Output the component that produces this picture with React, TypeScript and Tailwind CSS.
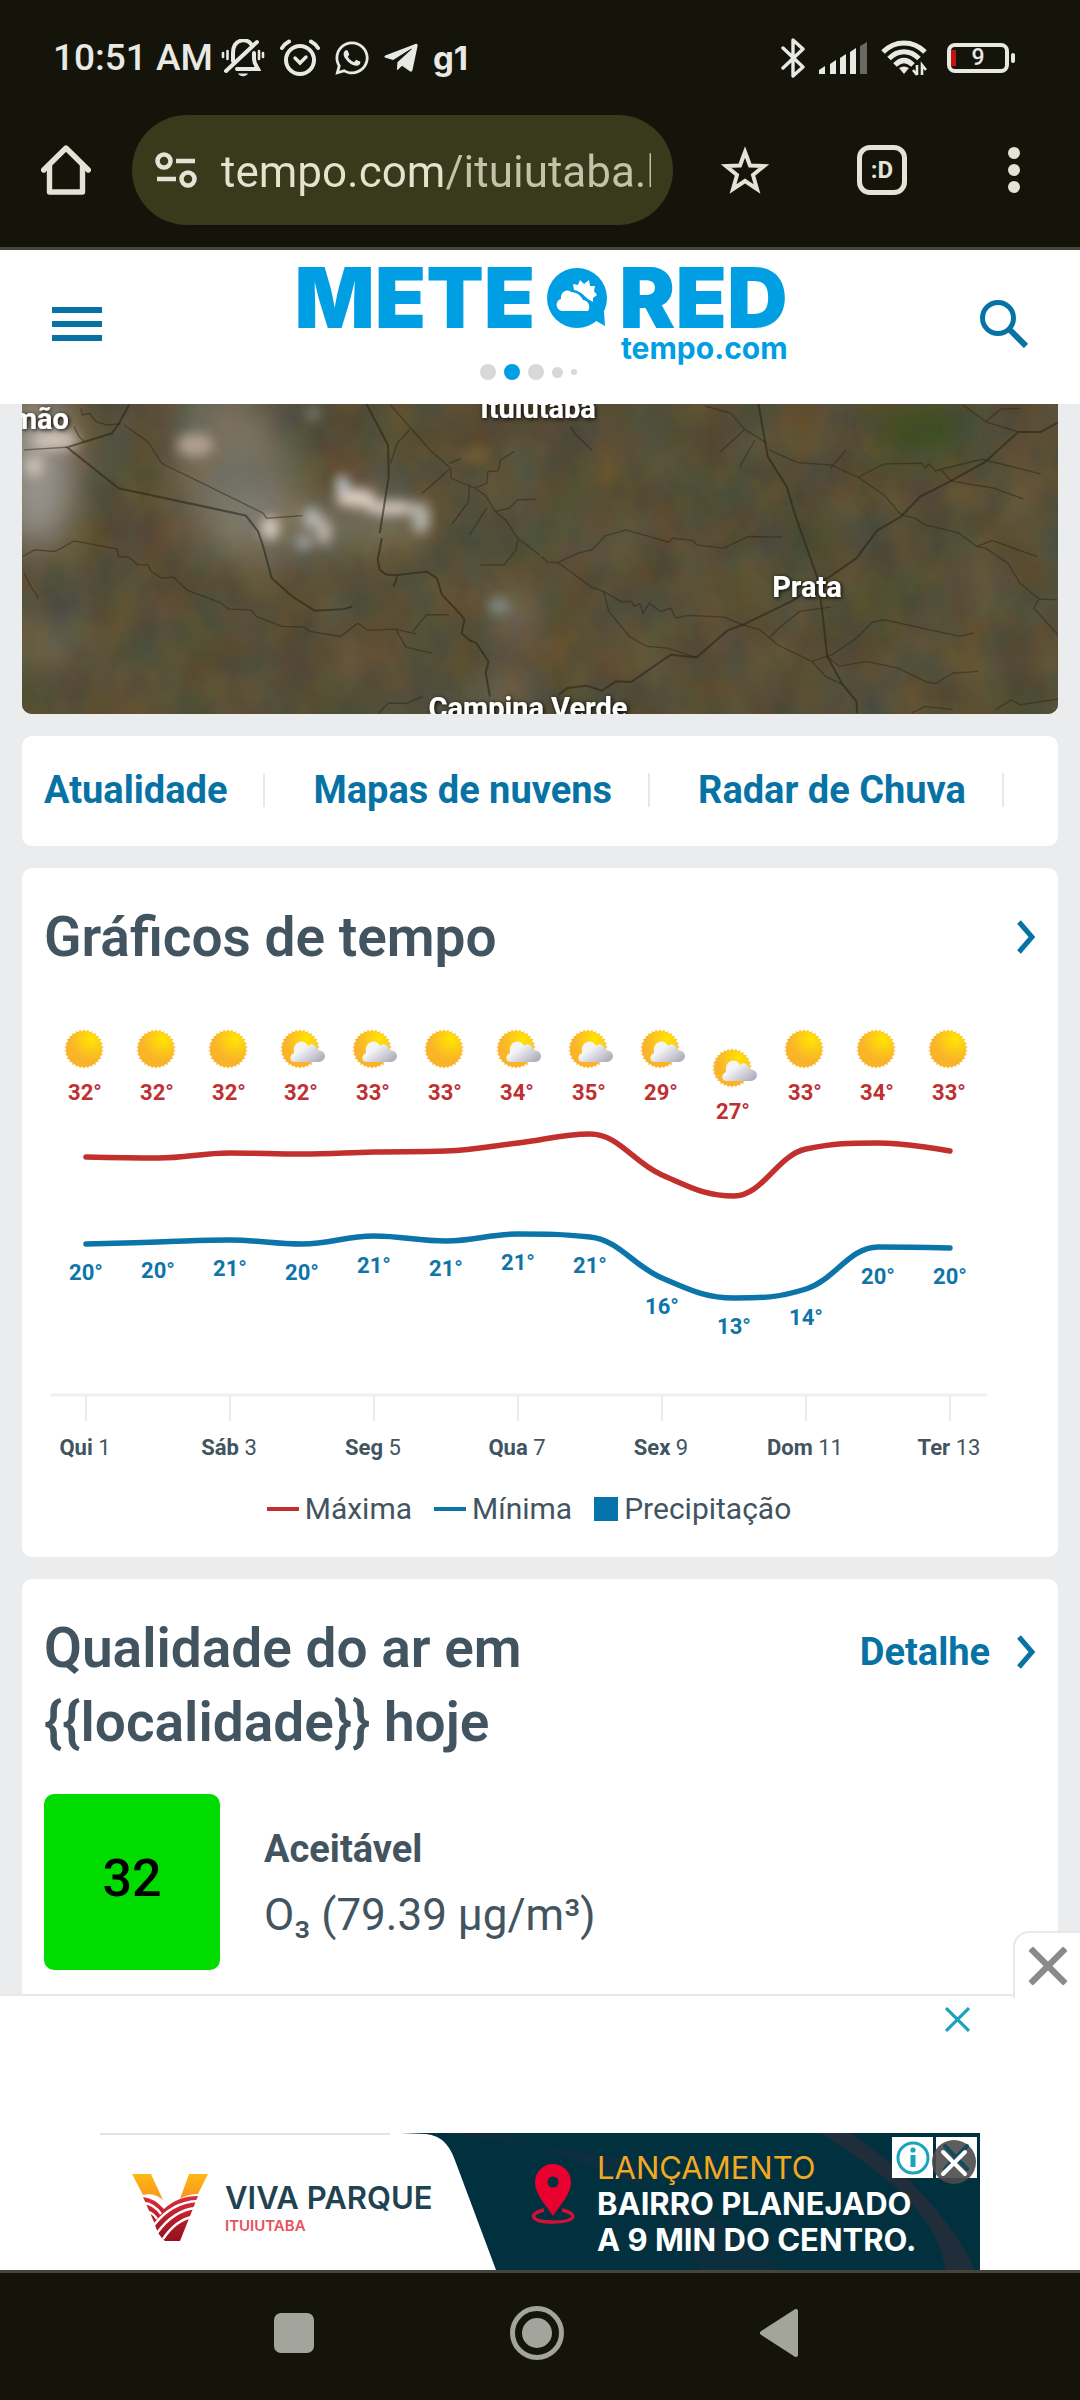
import React, { useState } from "react";
import { FaTelegramPlane, FaWhatsapp } from "react-icons/fa";

const days = [
  { name: "Qui", num: 1, icon: "sun", max: 32, min: 20, maxY: 1156, minY: 1243, labelY: 1279 },
  { name: "Sex", num: 2, icon: "sun", max: 32, min: 20, maxY: 1157, minY: 1241, labelY: 1277 },
  { name: "Sáb", num: 3, icon: "sun", max: 32, min: 21, maxY: 1152, minY: 1239, labelY: 1275 },
  { name: "Dom", num: 4, icon: "cloud", max: 32, min: 20, maxY: 1153, minY: 1243, labelY: 1279 },
  { name: "Seg", num: 5, icon: "cloud", max: 33, min: 21, maxY: 1151, minY: 1235, labelY: 1272 },
  { name: "Ter", num: 6, icon: "sun", max: 33, min: 21, maxY: 1150, minY: 1240, labelY: 1275 },
  { name: "Qua", num: 7, icon: "cloud", max: 34, min: 21, maxY: 1142, minY: 1233, labelY: 1269 },
  { name: "Qui", num: 8, icon: "cloud", max: 35, min: 21, maxY: 1133, minY: 1236, labelY: 1272 },
  { name: "Sex", num: 9, icon: "cloud", max: 29, min: 16, maxY: 1174, minY: 1277, labelY: 1313 },
  { name: "Sáb", num: 10, icon: "cloud", max: 27, min: 13, maxY: 1195, minY: 1297, labelY: 1333 },
  { name: "Dom", num: 11, icon: "sun", max: 33, min: 14, maxY: 1148, minY: 1288, labelY: 1324 },
  { name: "Seg", num: 12, icon: "sun", max: 34, min: 20, maxY: 1142, minY: 1246, labelY: 1283 },
  { name: "Ter", num: 13, icon: "sun", max: 33, min: 20, maxY: 1150, minY: 1247, labelY: 1283 },
];

const dayX = (i: number) => 86 + i * 72;

// smooth line through the points, without overshooting them
function spline(ys: number[]) {
  const pts = ys.map((y, i) => ({ x: dayX(i), y }));
  let d = `M${pts[0].x} ${pts[0].y}`;
  let prev = { x: pts[0].x, y: pts[0].y };

  for (let i = 1; i < pts.length; i++) {
    const p = pts[i];
    const last = pts[i - 1];
    const next = pts[i + 1];
    let lx = p.x;
    let ly = p.y;
    let rx = p.x;
    let ry = p.y;
    if (next) {
      lx = (1.5 * p.x + last.x) / 2.5;
      ly = (1.5 * p.y + last.y) / 2.5;
      rx = (1.5 * p.x + next.x) / 2.5;
      ry = (1.5 * p.y + next.y) / 2.5;
      const correction = ((ry - ly) * (rx - p.x)) / (rx - lx) + p.y - ry;
      ly += correction;
      ry += correction;
      if (ly > last.y && ly > p.y) {
        ly = Math.max(last.y, p.y);
        ry = 2 * p.y - ly;
      } else if (ly < last.y && ly < p.y) {
        ly = Math.min(last.y, p.y);
        ry = 2 * p.y - ly;
      }
      if (ry > next.y && ry > p.y) {
        ry = Math.max(next.y, p.y);
        ly = 2 * p.y - ry;
      } else if (ry < next.y && ry < p.y) {
        ry = Math.min(next.y, p.y);
        ly = 2 * p.y - ry;
      }
    }
    d += ` C${prev.x} ${prev.y} ${lx} ${ly} ${p.x} ${p.y}`;
    prev = { x: rx, y: ry };
  }
  return d;
}

const sunRays = Array.from({ length: 30 }, (_, i) => i * 12);

function SunIcon({ x, y, cloudy }: { x: number; y: number; cloudy: boolean }) {
  return (
    <g transform={`translate(${x} ${y})`}>
      {sunRays.map((deg) => (
        <path key={deg} d="M-1.4 -17.500L0 -19.800L1.4 -17.500Z" fill="#f7b62c" transform={`rotate(${deg})`} />
      ))}
      <circle r="18" fill="url(#sun)" />
      {cloudy && (
        <path
          d="M-5 13C-11 13 -11 6 -6 4C-8 -8 4 -11 8 -3C12 -7 17 -3 18 2C26 0 28 12 19 13Z"
          fill="url(#cloud)"
        />
      )}
    </g>
  );
}

function Cross({ className, width }: { className: string; width: number }) {
  return (
    <svg viewBox="0 0 24 24" className={className} fill="none" stroke="currentColor" strokeWidth={width} preserveAspectRatio="none">
      <path d="M1 1L23 23M23 1L1 23" />
    </svg>
  );
}

function Chevron() {
  return (
    <svg viewBox="0 0 20 34" className="w-5 h-[34px]" fill="none" stroke="#0773a5" strokeWidth="5">
      <path d="M3 2L16 17L3 32" />
    </svg>
  );
}

function StatusBar() {
  return (
    <div className="h-[115px] pl-[53px] pr-[65px] flex items-center justify-between text-[#e8e8e4]">
      <div className="flex items-center">
        <span className="text-[37px] leading-10 font-medium mr-2">10:51 AM</span>
        <div className="flex items-center gap-[15px]">
          <svg viewBox="0 0 44 38" className="w-11 h-[38px]" fill="none" stroke="currentColor" strokeWidth="4" strokeLinecap="round">
            <path d="M12 22V14C12 -1 27 -1 30 5" />
            <path d="M33 14V20C33 24 35 26 37 30H16" />
            <path d="M5 32L36 3" />
            <path d="M17 34.5H27C25 38 19 38 17 34.5Z" fill="currentColor" stroke="none" />
            <path d="M2 14V18M6.5 12V20M38 12V20M42 14V18" strokeWidth="2.6" />
          </svg>
          <svg viewBox="0 0 40 38" className="w-10 h-[38px]" fill="none" stroke="currentColor" strokeLinecap="round">
            <circle cx="20" cy="21" r="14" strokeWidth="4" />
            <path d="M2 9C4 6 6 4 9 2.500M38 9C36 6 34 4 31 2.500" strokeWidth="4" />
            <path d="M15 19L20 24L26 18" strokeWidth="3.4" />
          </svg>
          <FaWhatsapp className="w-[34px] h-[38px]" />
          <FaTelegramPlane className="w-[34px] h-[38px]" />
          <span className="font-['Inter'] text-[33px] leading-8 font-bold">g1</span>
        </div>
      </div>

      <div className="flex items-center gap-[14px]">
        <svg viewBox="0 0 24 40" className="w-6 h-10" fill="none" stroke="currentColor" strokeWidth="3.4" strokeLinejoin="round" strokeLinecap="round">
          <path d="M2 10L22 29L12 38V2L22 11L2 30" />
        </svg>
        <svg viewBox="0 0 48 32" className="w-12 h-8" fill="currentColor">
          <path d="M0 28L6 24V32H0ZM11 22L17 18V32H11ZM21 16L27 12V32H21ZM31 10L37 6V32H31Z" />
          <path d="M41 4L48 0V32H41Z" opacity="0.4" />
        </svg>
        <svg viewBox="0 0 46 36" className="w-[46px] h-9" fill="none" stroke="currentColor" strokeWidth="5">
          <path d="M2 12C14 0 32 0 44 12" />
          <path d="M8 18.500C17 9.500 29 9.500 38 18.500" />
          <path d="M14 25C20 19 26 19 32 25" />
          <path d="M18 28Q23 25 28 28L23 34Z" fill="currentColor" stroke="none" />
          <path d="M36 25V35M32 30L36 35M41 35V25L45 30" strokeWidth="2.6" />
        </svg>
        <div className="ml-[6px] flex items-center gap-[2px]">
          <div className="relative w-[62px] h-[30px] border-4 border-current rounded-[8px] flex items-center justify-center">
            <div className="absolute left-0 inset-y-[3px] w-[5px] bg-[#c3130b]" />
            <span className="text-[23px] leading-6 font-medium">9</span>
          </div>
          <div className="w-1 h-[10px] bg-current rounded-[2px]" />
        </div>
      </div>
    </div>
  );
}

function BrowserBar() {
  const [url, setUrl] = useState("tempo.com/ituiutaba.htm");

  return (
    <div className="flex items-center pl-[41px] pr-[60px] pb-[22px] border-b-[3px] border-[#45463a] text-[#e5e2d6]">
      <button aria-label="Início">
        <svg viewBox="0 0 50 50" className="block w-[50px] h-[50px]" fill="none" stroke="currentColor" strokeWidth="5.400" strokeLinejoin="round" strokeLinecap="round">
          <path d="M2.700 25L25 3L47.300 25" />
          <path d="M8.500 20V47H41.500V20" />
        </svg>
      </button>
      <div className="flex-1 min-w-0 ml-[41px] h-[110px] rounded-full bg-[#39391c] pl-[23px] pr-[22px] flex items-center gap-6">
        <svg viewBox="0 0 42 36" className="w-[42px] h-9 shrink-0" fill="none" stroke="currentColor" strokeWidth="4.500">
          <circle cx="9" cy="9" r="6.500" />
          <circle cx="33" cy="27" r="6.500" />
          <path d="M21 9H40M2 27H21" />
        </svg>
        <input
          type="text"
          aria-label="Endereço"
          className="flex-1 min-w-0 h-16 pt-1 text-[44px] text-transparent bg-clip-text bg-[linear-gradient(90deg,#e5e2d0_224px,#c4c2ab_224px)] outline-none"
          value={url}
          onChange={(e) => setUrl(e.target.value)}
        />
      </div>
      <button aria-label="Favoritos" className="ml-12">
        <svg viewBox="0 0 48 48" className="block w-12 h-12" fill="none" stroke="currentColor" strokeWidth="4">
          <path d="M24 6L29 19.500L43 20L32 29L36 43L24 35L12 43L16 29L5 20L19 19.500Z" />
        </svg>
      </button>
      <button
        aria-label="Abas"
        className="ml-[88px] w-[50px] h-[50px] border-[5px] border-current rounded-[13px] text-[24px] leading-6 font-bold"
      >
        :D
      </button>
      <button aria-label="Menu" className="ml-[101px] flex flex-col gap-[5px]">
        <span className="w-3 h-3 rounded-full bg-current" />
        <span className="w-3 h-3 rounded-full bg-current" />
        <span className="w-3 h-3 rounded-full bg-current" />
      </button>
    </div>
  );
}

function SiteHeader() {
  return (
    <header className="relative h-[154px] bg-white px-[52px] pb-[6px] flex items-center justify-between">
      <button aria-label="Menu do site" className="flex flex-col gap-2">
        <span className="w-[50px] h-[6px] bg-[#0773a5]" />
        <span className="w-[50px] h-[6px] bg-[#0773a5]" />
        <span className="w-[50px] h-[6px] bg-[#0773a5]" />
      </button>

      <a href="#" className="self-start pt-[18px] font-['Inter'] text-[#009ee2]">
        <span className="flex items-center gap-3 text-[84px] leading-[60px] font-black">
          METE
          <svg viewBox="0 0 60 60" className="w-[60px] h-[60px]">
            <path d="M30 0A30 30 0 1 1 30 60A30 30 0 0 1 30 0Z" fill="#009ee2" />
            <path d="M44 50L57 43L58 58Z" fill="#009ee2" />
            <path d="M15 43C8 42 8 32 14 31C13 25 19 20 24 24C30 24 34 28 36 32C42 33 44 39 41 43Z" fill="#fff" />
            <path d="M27 22L26 16L31 17L33 12L37 16L42 12L43 18L48 18L47 23L50 27L46 30L46 34L41 31C37 28 34 23 27 22Z" fill="#fff" />
          </svg>
          RED
        </span>
        <span className="block text-right text-[30px] leading-10 font-bold">tempo.com</span>
      </a>

      <button aria-label="Buscar">
        <svg viewBox="0 0 48 48" className="block w-12 h-12" fill="none" stroke="#0773a5" strokeWidth="5">
          <circle cx="18" cy="18" r="15.500" />
          <path d="M29 29L46 46" strokeWidth="6" />
        </svg>
      </button>

      {/* page dots */}
      <div className="absolute bottom-6 inset-x-0 flex items-center justify-center gap-2 pr-6">
        <span className="w-4 h-4 rounded-full bg-[#d8d8d8]" />
        <span className="w-4 h-4 rounded-full bg-[#009ee2]" />
        <span className="w-4 h-4 rounded-full bg-[#d8d8d8]" />
        <span className="w-[11px] h-[11px] rounded-full bg-[#d8d8d8]" />
        <span className="w-[6px] h-[6px] rounded-full bg-[#d8d8d8]" />
      </div>
    </header>
  );
}

function SatelliteMap() {
  return (
    <svg viewBox="22 4 1036 310" preserveAspectRatio="xMidYMid slice" className="block w-full h-[310px] rounded-b-[10px]">
      <defs>
        <filter id="terrain" x="0" y="0" width="100%" height="100%" colorInterpolationFilters="sRGB">
          <feTurbulence type="fractalNoise" baseFrequency="0.022 0.018" numOctaves="3" seed="8" />
          <feColorMatrix values="0.16 0 0 0 0.262  0.04 0.08 0 0 0.25  -0.05 0.04 0.08 0 0.18  0 0 0 0 1" />
        </filter>
        <filter id="soft" x="-60%" y="-60%" width="220%" height="220%">
          <feGaussianBlur stdDeviation="6" />
        </filter>
        <filter id="haze" x="-60%" y="-60%" width="220%" height="220%">
          <feGaussianBlur stdDeviation="18" />
        </filter>
        <filter id="labelShadow" x="-20%" y="-40%" width="140%" height="180%">
          <feDropShadow dx="1" dy="1" stdDeviation="2" floodColor="#000" floodOpacity="1" />
        </filter>
      </defs>
      <rect x="22" y="4" width="1036" height="310" fill="#57503a" />
      <rect x="22" y="4" width="1036" height="310" filter="url(#terrain)" />

      {/* thin haze */}
      <g filter="url(#haze)" fill="#a3a09c">
        <ellipse cx="38" cy="70" rx="36" ry="80" opacity="0.85" />
        <ellipse cx="235" cy="75" rx="60" ry="60" opacity="0.4" />
        <ellipse cx="270" cy="130" rx="60" ry="40" opacity="0.35" />
        <ellipse cx="220" cy="10" rx="50" ry="20" opacity="0.4" />
        <ellipse cx="370" cy="120" rx="60" ry="30" opacity="0.35" />
        <ellipse cx="510" cy="215" rx="18" ry="30" opacity="0.35" />
        <ellipse cx="505" cy="292" rx="22" ry="12" opacity="0.5" />
        <ellipse cx="50" cy="240" rx="40" ry="25" opacity="0.2" />
        <ellipse cx="920" cy="28" rx="50" ry="22" fill="#2d4a1b" opacity="0.8" />
        <ellipse cx="820" cy="140" rx="30" ry="20" fill="#3b452d" opacity="0.7" />
        <ellipse cx="720" cy="105" rx="30" ry="12" fill="#37432f" opacity="0.7" />
        <ellipse cx="860" cy="208" rx="30" ry="10" fill="#36402b" opacity="0.7" />
      </g>

      {/* brighter clouds */}
      <g filter="url(#soft)" fill="#dccfc4">
        <ellipse cx="195" cy="45" rx="18" ry="12" fill="#b8a596" opacity="0.9" />
        <ellipse cx="55" cy="40" rx="24" ry="10" opacity="0.8" />
        <ellipse cx="34" cy="66" rx="9" ry="10" opacity="0.8" />
        <ellipse cx="342" cy="84" rx="6" ry="8" fill="#c5d2dd" opacity="1" />
        <ellipse cx="356" cy="98" rx="20" ry="9" opacity="1" />
        <ellipse cx="390" cy="108" rx="26" ry="7" opacity="0.95" />
        <ellipse cx="421" cy="118" rx="9" ry="16" fill="#c6c5c4" opacity="0.8" />
        <ellipse cx="270" cy="128" rx="9" ry="12" opacity="0.95" />
        <ellipse cx="312" cy="118" rx="9" ry="10" fill="#c3ccd0" opacity="0.8" />
        <ellipse cx="324" cy="132" rx="7" ry="13" opacity="0.75" />
        <ellipse cx="304" cy="142" rx="8" ry="7" fill="#acb4b5" opacity="0.8" />
        <ellipse cx="313" cy="14" rx="7" ry="7" fill="#8e8e88" opacity="0.7" />
        <ellipse cx="499" cy="206" rx="10" ry="7" fill="#8fa3ad" opacity="0.7" />
        <ellipse cx="474" cy="56" rx="16" ry="7" fill="#8a6a35" opacity="0.6" />
      </g>

      {/* roads and rivers, west half */}
      <g transform="scale(0.344 0.333)" fill="none" stroke="#2b2519">
        <g strokeWidth="6" opacity="0.6">
          <path d="M375 15L345 72L325 100L195 142L345 265L715 347L750 395L765 440L790 535L850 590L915 633L1000 628L1024 620" />
          <path d="M1065 12L1128 135L1130 230L1104 400M1110 415L1098 480L1104 510L1122 524L1150 526L1240 515L1270 535L1285 585L1340 645L1350 660L1342 700L1365 722L1385 730L1420 785L1412 820L1424 890M1155 530L1144 560" />
        </g>
        <g strokeWidth="4" opacity="0.5">
          <path d="M70 150L195 142M235 25L240 45L260 40L280 65L310 75L350 72M215 80L230 110L245 125" />
          <path d="M360 75L430 125L470 190L765 340L775 355L880 347" />
          <path d="M66 470L100 450L160 455L215 423L340 448L345 470L375 472L400 495L430 495L440 515L470 535L505 532L545 572L640 608L665 628L730 630L745 650L820 680L885 682L900 695L990 710L1040 670L1070 692L1150 688L1210 703" />
          <path d="M1150 688L1180 742L1255 760M1200 695L1240 645L1305 645M70 520L90 560L112 595" />
          <path d="M1135 15L1250 150L1310 205L1228 280M1190 90L1155 130L1135 190M1310 205L1312 235L1380 265L1410 285L1440 335L1470 360L1505 415L1568 465" />
          <path d="M1305 190L1340 177M1365 255L1362 305L1315 372M1415 325L1365 405M1505 420L1500 450L1465 495L1395 495M1380 265L1415 250L1418 215L1448 213L1455 180L1495 155M1440 335L1480 325L1505 300L1560 298" />
          <path d="M1100 940L1130 910L1180 912L1230 890" />
        </g>
      </g>

      {/* east half */}
      <g transform="translate(540 0) scale(0.344 0.333)" fill="none" stroke="#2b2519">
        <g strokeWidth="6" opacity="0.6">
          <path d="M635 12L662 170L718 262L740 340L805 530L820 630L835 770L880 855L920 905L922 940" />
          <path d="M1505 68L1455 96L1390 96L1295 185L1195 243L1105 290L1050 350L980 392L920 475L850 525L730 605L590 675L545 692L455 773L380 765L265 847L220 845L180 873L135 858L80 865L55 885" />
        </g>
        <g strokeWidth="4" opacity="0.5">
          <path d="M480 18L555 40L595 88L660 130M595 88L525 155M625 120L580 202" />
          <path d="M665 150L750 188L845 195L925 232L1000 285L1050 345L1090 355L1120 375L1215 398L1270 440L1315 422L1445 470M890 150L845 205" />
          <path d="M925 232L1000 192L1110 190L1120 205L1130 192L1150 213L1165 208L1195 243L1320 265L1405 297M1165 208L1285 178L1455 222M1230 15L1295 65L1390 96M1295 65L1340 27L1395 25" />
          <path d="M1270 440L1295 445L1360 490L1395 550L1450 597L1505 600M1450 597L1436 625L1505 705" />
          <path d="M5 470L22 487L52 488L110 460L150 450L190 408L250 390L375 427L385 415L445 422L455 435L535 445L605 410L705 412" />
          <path d="M52 488L150 562L185 575L235 605L265 605L275 620L290 612L300 640L318 610L350 635L380 625L395 655L430 647L535 652L590 675L640 690L690 735L790 785L830 830L880 855M185 575L200 635L260 710L310 740L370 745L455 773" />
          <path d="M665 715L700 680L755 635L845 622M790 785L850 765L920 715L965 668L1000 660L1220 710L1260 700M835 770L870 800L950 785L1040 805L1120 845L1150 852L1200 820L1275 815M90 80L100 100L150 150M1080 940L1120 920L1200 930M1325 930L1370 900L1395 915L1505 898" />
        </g>
      </g>

      <g className="text-[29px] font-bold" fill="#fff" filter="url(#labelShadow)">
        <text x="69" y="29" textAnchor="end">Simão</text>
        <text x="538" y="18" textAnchor="middle">Ituiutaba</text>
        <text x="807" y="197" textAnchor="middle">Prata</text>
        <text x="528" y="318" textAnchor="middle">Campina Verde</text>
      </g>
    </svg>
  );
}

function ForecastChart() {
  return (
    <svg viewBox="22 1000 1036 470" className="block w-full" role="img" aria-label="Gráficos de tempo">
      <defs>
        <radialGradient id="sun" cx="0.7" cy="0.22" r="0.6">
          <stop offset="0" stopColor="#ffe500" />
          <stop offset="1" stopColor="#f9b42a" />
        </radialGradient>
        <linearGradient id="cloud" x1="0.1" y1="0.1" x2="1" y2="0.8">
          <stop offset="0.3" stopColor="#f5f5f7" />
          <stop offset="1" stopColor="#abadbd" />
        </linearGradient>
      </defs>

      <path d="M50 1394H987" stroke="#f0f0f0" strokeWidth="3" />
      {days.map((day, i) => {
        const x = dayX(i);
        const drop = day.num === 10 ? 19 : 0;
        return (
          <g key={day.num}>
            <SunIcon x={x - 2} y={1048 + drop} cloudy={day.icon === "cloud"} />
            <g className="text-[22px] font-bold" textAnchor="middle">
              <text x={x - 1} y={1099 + drop} fill="#bf3030">{day.max}°</text>
              <text x={x} y={day.labelY} fill="#0d75a8">{day.min}°</text>
            </g>
            {i % 2 === 0 && (
              <>
                <path d={`M${x} 1395V1420`} stroke="#ebebeb" strokeWidth="2" />
                <text x={x - 1} y="1454" textAnchor="middle" fill="#42545f" className="text-[22px]">
                  <tspan className="font-bold">{day.name}</tspan> {day.num}
                </text>
              </>
            )}
          </g>
        );
      })}

      <g fill="none" strokeWidth="5.500" strokeLinecap="round">
        <path d={spline(days.map((d) => d.maxY))} stroke="#c1302d" />
        <path d={spline(days.map((d) => d.minY))} stroke="#0b75a9" />
      </g>
    </svg>
  );
}

function AdBanner() {
  return (
    <div className="relative h-[137px] overflow-hidden flex items-center font-['Inter']">
      <svg viewBox="0 0 880 137" preserveAspectRatio="none" className="absolute inset-0 w-full h-full">
        <rect width="880" height="137" fill="#fff" />
        <path d="M0 1H290" stroke="#e4e4e4" strokeWidth="2" />
        <path d="M300 0H880V137H396L356 30C350 12 342 3 326 1Z" fill="#01303f" />
        <path d="M720 0H750C790 25 850 80 875 137H845C840 80 770 30 720 0Z" fill="#2d2c3a" opacity="0.7" />
        <path d="M400 0H340L530 26L600 137H680L610 80Z" fill="#182c3d" opacity="0.5" />
      </svg>

      <div className="relative w-[431px] shrink-0 pl-8 pt-3 flex items-center gap-[17px]">
        <svg viewBox="0 0 76 67" className="w-[76px] h-[67px]">
          <defs>
            <linearGradient id="vTop" x1="0" y1="0" x2="0" y2="1">
              <stop offset="0" stopColor="#ffb914" />
              <stop offset="1" stopColor="#f7941e" />
            </linearGradient>
            <linearGradient id="vBottom" x1="0" y1="0" x2="0" y2="1">
              <stop offset="0" stopColor="#dd2c3c" />
              <stop offset="1" stopColor="#95101c" />
            </linearGradient>
          </defs>
          <path d="M0 0H19L31 26Q22 18 11 21Z" fill="url(#vTop)" />
          <path d="M57 0H76L66 20Q56 20 48 25Z" fill="url(#vTop)" />
          <path d="M11 23Q22 24 32 35Q46 22 66 22L48 67H33Q26 62 22 48Z" fill="url(#vBottom)" />
          <g fill="none" stroke="#fff" strokeWidth="2.400">
            <path d="M12 29Q22 30 29 40M17 38Q22 40 25 45" />
            <path d="M22 51Q40 28 66 27M25 59Q42 36 64 34M31 65Q44 46 60 43" />
          </g>
        </svg>
        <div>
          <p className="text-[31px] leading-9 font-semibold text-[#1f4351]">VIVA PARQUE</p>
          <p className="text-[15px] leading-5 font-semibold text-[#e8505b]">ITUIUTABA</p>
        </div>
      </div>

      <div className="relative flex items-center gap-[21px] pt-1">
        <svg viewBox="0 0 45 60" className="w-[45px] h-[60px] mb-5">
          <path d="M22 0A18 18 0 0 1 40 18C40 30 30 40 22 52C14 40 4 30 4 18A18 18 0 0 1 22 0Z" fill="#e8002f" />
          <circle cx="22" cy="18" r="5.500" fill="#01303f" />
          <path d="M13 46C-4 50 0 58 22 58C45 58 48 50 31 46" fill="none" stroke="#d01235" strokeWidth="3.400" />
        </svg>
        <div className="text-[31px] leading-9 font-bold text-white whitespace-nowrap">
          <p className="font-normal text-[#f2a922]">LANÇAMENTO</p>
          <p>BAIRRO PLANEJADO</p>
          <p>A 9 MIN DO CENTRO.</p>
        </div>
      </div>

      <div className="absolute top-1 right-[3px] flex gap-[3px]">
        <button aria-label="Sobre este anúncio" className="w-[41px] h-[41px] bg-white flex items-center justify-center">
          <svg viewBox="0 0 34 34" className="w-[34px] h-[34px]" fill="none" stroke="#1ba3bd">
            <circle cx="17" cy="17" r="15" strokeWidth="3" />
            <path d="M17 14V26" strokeWidth="5" />
            <circle cx="17" cy="9" r="2.600" fill="#1ba3bd" stroke="none" />
          </svg>
        </button>
        <button aria-label="Fechar anúncio" className="w-[41px] h-[41px] bg-white">
          <svg viewBox="0 0 41 41" className="block w-[41px] h-[41px] overflow-visible" fill="none" strokeWidth="4" strokeLinecap="round">
            <circle cx="18" cy="25" r="22" fill="#4b4b4b" opacity="0.9" />
            <path d="M9 9L31 32M31 9L9 32" stroke="#124b59" />
            <path d="M7 15L29 37M29 15L7 37" stroke="#fff" />
          </svg>
        </button>
      </div>
    </div>
  );
}

export default function App() {
  const [adOpen, setAdOpen] = useState(true);

  return (
    <div className="h-screen flex flex-col bg-[#ebecee] font-['Roboto',sans-serif] text-[#42545f]">
      <div className="shrink-0 bg-[#14140a]">
        <StatusBar />
        <BrowserBar />
      </div>

      <SiteHeader />

      <main className="flex-1 min-h-0 overflow-hidden px-[22px] flex flex-col gap-[22px]">
        <div className="shrink-0">
          <SatelliteMap />
        </div>

        <nav className="shrink-0 h-[110px] bg-white rounded-[10px] px-[22px] pb-[2px] flex items-center overflow-hidden text-[38px] leading-[34px] font-bold text-[#0773a5] whitespace-nowrap">
          <a href="#" className="pr-9">Atualidade</a>
          <a href="#" className="pl-12 pr-9 border-l-2 border-[#e6e8ea]">Mapas de nuvens</a>
          <a href="#" className="pl-12 pr-9 border-x-2 border-[#e6e8ea]">Radar de Chuva</a>
        </nav>

        <section className="shrink-0 bg-white rounded-[10px]">
          <div className="flex items-center justify-between px-[22px] pt-8">
            <h2 className="text-[55px] leading-[74px] font-semibold">Gráficos de tempo</h2>
            <a href="#" aria-label="Ver gráficos"><Chevron /></a>
          </div>
          <div className="pt-[27px]">
            <ForecastChart />
          </div>
          <div className="flex items-center justify-center gap-[22px] pt-[18px] pb-7 pr-[22px] text-[30px] leading-10">
            <span className="flex items-center gap-[6px]">
              <span className="w-8 h-1 bg-[#c1302d]" />
              Máxima
            </span>
            <span className="flex items-center gap-[6px]">
              <span className="w-8 h-1 bg-[#0b75a9]" />
              Mínima
            </span>
            <span className="flex items-center gap-[6px]">
              <span className="w-6 h-6 bg-[#0773ad]" />
              Precipitação
            </span>
          </div>
        </section>

        <section className="shrink-0 bg-white rounded-t-[10px] px-[22px] pt-8 pb-12">
          <div className="flex items-start justify-between">
            <h2 className="text-[55px] leading-[74px] font-semibold">
              Qualidade do ar em
              <br />
              {"{{localidade}} hoje"}
            </h2>
            <a href="#" className="flex items-center gap-[26px] h-[82px] text-[38px] font-bold text-[#0773a5]">
              Detalhe
              <Chevron />
            </a>
          </div>
          <div className="flex items-center gap-11 pt-[35px]">
            <div className="w-44 h-44 rounded-[10px] bg-[#00dc00] text-black text-[52px] leading-[60px] pb-[6px] font-medium flex items-center justify-center">
              32
            </div>
            <div>
              <p className="text-[38px] leading-[66px] font-bold">Aceitável</p>
              <p className="text-[44px] leading-[66px]">O₃ (79.39 µg/m³)</p>
            </div>
          </div>
        </section>
      </main>

      {adOpen && (
        <aside className="relative shrink-0 bg-white border-t-2 border-[#e8e8ea]">
          <button
            aria-label="Fechar"
            onClick={() => setAdOpen(false)}
            className="absolute -top-[65px] right-0 w-[67px] h-[67px] bg-white border-l-2 border-t-2 border-[#e8e8ea] rounded-tl-[16px] flex items-center justify-center text-[#8a8a8a]"
          >
            <Cross className="w-[38px] h-[38px]" width={4} />
          </button>
          <div className="relative max-w-[880px] mx-auto pt-[137px]">
            <button aria-label="Ocultar" className="absolute top-[11px] right-[10px] text-[#1ba3bd]">
              <Cross className="block w-[25px] h-[25px]" width={3} />
            </button>
            <AdBanner />
          </div>
        </aside>
      )}

      <div className="relative shrink-0 h-[130px] pb-2 bg-[#14140a] border-t-[3px] border-[#45463a] flex items-center justify-center gap-[196px] pr-2 text-[#a3a49c]">
        <button aria-label="Recentes" className="w-10 h-10 rounded-[7px] bg-current" />
        <button aria-label="Tela inicial" className="w-[54px] h-[54px] rounded-full border-[5px] border-current flex items-center justify-center">
          <span className="w-[30px] h-[30px] rounded-full bg-current" />
        </button>
        <button aria-label="Voltar">
          <svg viewBox="0 0 38 48" className="block w-[38px] h-12" fill="currentColor" stroke="currentColor" strokeWidth="4" strokeLinejoin="round">
            <path d="M36 2V46L2 24Z" />
          </svg>
        </button>
      </div>
    </div>
  );
}
